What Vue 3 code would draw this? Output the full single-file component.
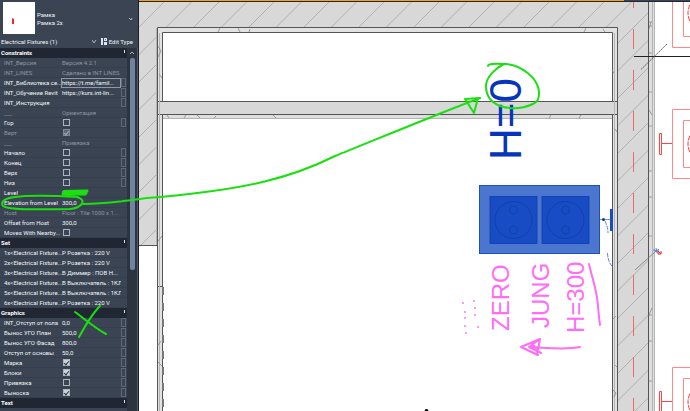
<script setup>
import { reactive } from 'vue'

const sections = reactive([
  {
    title: 'Constraints',
    rows: [
      { label: 'INT_Версия', value: 'Версия 4.2.1', muted: true },
      { label: 'INT_LINES', value: 'Сделано в INT LINES', muted: true },
      { label: 'INT_Библиотека се...', value: 'https://t.me/famil...', link: true, active: true },
      { label: 'INT_Обучение Revit', value: 'https://kurs.int-lin...', link: true },
      { label: 'INT_Инструкция', value: '', link: true },
      { label: '___', value: 'Ориентация', muted: true },
      { label: 'Гор', checked: false, link: true },
      { label: 'Верт', checked: true, muted: true },
      { label: '___', value: 'Привязка', muted: true },
      { label: 'Начало', checked: false, link: true },
      { label: 'Конец', checked: false, link: true },
      { label: 'Верх', checked: false, link: true },
      { label: 'Низ', checked: false, link: true },
      { label: 'Level', value: 'Level 1' },
      { label: 'Elevation from Level', value: '300,0' },
      { label: 'Host', value: 'Floor : Tile 1000 x 1...', muted: true },
      { label: 'Offset from Host', value: '300,0' },
      { label: 'Moves With Nearby...', checked: false }
    ]
  },
  {
    title: 'Set',
    rows: [
      { label: '1x<Electrical Fixture...', value: 'Р Розетка : 220 V' },
      { label: '2x<Electrical Fixture...', value: 'Р Розетка : 220 V' },
      { label: '3x<Electrical Fixture...', value: 'В Диммер : ПОВ Н...' },
      { label: '4x<Electrical Fixture...', value: 'В Выключатель : 1КЛ' },
      { label: '5x<Electrical Fixture...', value: 'В Выключатель : 1КЛ' },
      { label: '6x<Electrical Fixture...', value: 'Р Розетка : 220 V' }
    ]
  },
  {
    title: 'Graphics',
    rows: [
      { label: 'INT_Отступ от пола', value: '0,0', link: true },
      { label: 'Вынос УГО План', value: '500,0', link: true },
      { label: 'Вынос УГО Фасад', value: '800,0', link: true },
      { label: 'Отступ от основы', value: '50,0', link: true },
      { label: 'Марка', checked: true, link: true },
      { label: 'Блоки', checked: true, link: true },
      { label: 'Привязка', checked: false, link: true },
      { label: 'Выноска', checked: true, link: true }
    ]
  },
  { title: 'Text', rows: [{ label: 'INT_Текст', value: 'Розетка' }] }
])

// Diagonal hatch: every line satisfies x + y = sum
const hatch = Array.from({ length: 34 }, (_, k) => 166 + k * 27.5)
const axisDashes = Array.from({ length: 11 }, (_, k) => k * 41 - 12)
const shadowDashes = Array.from({ length: 8 }, (_, k) => 287 + k * 16)
const fixtures = [-22, 109, 367]
const sockets = [513, 565]
const dots = [[463, 303], [474, 301], [465, 312], [475, 308], [465, 318], [475, 315], [465, 326], [478, 327], [466, 333]]
const leftTicks = ['M158 46l3 5-3 6', 'M159 74l3 4', 'M158 241l4-5', 'M158 345l3-4', 'M158 362l4 4', 'M218 32l2-4', 'M240 32l-2-4', 'M249 32l1-3', 'M169 118l-2-3', 'M184 118l2-3', 'M200 118l-3-3', 'M214 118l2-2', 'M276 118l-3-3', 'M549 118l2-3', 'M579 118l2-3', 'M584 32l2-4', 'M605 32l-2-3', 'M614 73l-2-3', 'M617 132l-2-3', 'M613 319l3-3', 'M617 367l-2-2', 'M613 390l3 3-2 4']
const rightTicks = [22, 26, 53, 92, 126, 171, 197, 236, 315, 341, 381]
</script>

<template>
  <main class="workspace">
    <aside class="panel">
      <header class="family">
        <svg class="preview" viewBox="0 0 32 32" aria-hidden="true">
          <rect width="32" height="32" fill="#fff" />
          <path d="M9 16l2 1v5H9z" fill="#e52c2c" />
        </svg>
        <button class="type-picker" type="button">
          <span>Рамка<br />Рамка 2x</span>
          <svg class="arrow" viewBox="0 0 5 4"><path d="M1 1l2 2 1-2" /></svg>
        </button>
      </header>
      <div class="filter">
        <select aria-label="Category"><option>Electrical Fixtures (1)</option></select>
        <svg class="arrow" viewBox="0 0 5 4"><path d="M0 0l2 3 2-3" /></svg>
        <button class="edit" type="button">
          <svg viewBox="0 0 6 7" aria-hidden="true">
            <path d="M0 0h2v7H0zM3 0h3v3H3zM3 4h3v3H3z" fill="#dfe5ec" /><path d="M4 1h1v1H4z" fill="#4b82c8" />
          </svg>
          <span>Edit Type</span>
        </button>
      </div>
      <div class="body">
        <table>
          <colgroup><col class="c-name" /><col class="c-value" /><col class="c-link" /></colgroup>
          <tbody v-for="(section, s) in sections" :key="section.title">
            <tr class="section">
              <th colspan="2">{{ section.title }}</th>
              <td><button type="button" class="collapse" :aria-label="'Collapse ' + section.title"></button></td>
            </tr>
            <tr v-for="(row, r) in section.rows" :key="r" :class="{ muted: row.muted }">
              <th><label :for="`p-${s}-${r}`">{{ row.label }}</label></th>
              <td :class="{ active: row.active }">
                <input v-if="'checked' in row" :id="`p-${s}-${r}`" v-model="row.checked" type="checkbox" :disabled="row.muted" />
                <input v-else :id="`p-${s}-${r}`" v-model="row.value" type="text" :readonly="row.muted" />
              </td>
              <td><button v-if="row.link" type="button" class="link" :aria-label="'Associate ' + row.label"></button></td>
            </tr>
          </tbody>
        </table>
        <div class="scroll" aria-hidden="true">
          <svg class="arrow" viewBox="0 0 5 4"><path d="M0 3l2-2 2 2" /></svg>
          <i class="thumb"></i>
        </div>
      </div>
    </aside>

    <svg class="plan" viewBox="139 0 551 411" preserveAspectRatio="xMinYMin slice" role="img" aria-label="Floor plan">
      <defs>
        <clipPath id="walls"><path d="M139 2H648V411H618V27H157V245H139z" /></clipPath>
      </defs>
      <rect x="139" width="551" height="411" fill="#fff" />
      <path d="M139 2H648V411H618V27H157V245H139z" fill="#d8d8d8" />
      <g clip-path="url(#walls)" stroke="#a4a4a4" stroke-width="0.8">
        <line v-for="h in hatch" :key="h" :x1="h" y1="0" :x2="h - 411" y2="411" />
      </g>
      <path d="M157 27H618V411H612V32H163V411H157z" fill="#e2e2e2" />
      <rect x="158" y="101" width="460" height="14" fill="#d8d8d8" />
      <rect x="163" y="115" width="449" height="4" fill="#dedede" />
      <rect x="649" y="2" width="6" height="409" fill="#dedede" />
      <g fill="none" stroke="#555" stroke-width="1">
        <path d="M157.5 411V27.5H617.5V411M162.5 101V32.5H612.5V101M162.5 411V115M612.5 411V115M157 101.5H617M157 114.5H617M139 245.5H157M648.5 2V411" />
        <path d="M158 286.5h5" />
      </g>
      <path d="M159.500 33V411M163 118.500H612M614.500 33V411M652.500 2V411M654.500 2V411M156.500 28V245" fill="none" stroke="#b4b4b4" />
      <g fill="none" stroke="#888" stroke-width="0.8">
        <path v-for="t in leftTicks" :key="t" :d="t" />
        <path v-for="t in rightTicks" :key="t" :d="`M649 ${t}h3`" />
        <path d="M649 29l2-7M649 110l3 5M649 315l3-7" />
      </g>
      <rect v-for="d in shadowDashes" :key="d" x="162" :y="d" width="2" height="8" fill="#777" />
      <rect v-for="d in axisDashes" :key="d" x="633" :y="d" width="1" height="20" fill="#ee6a6a" />
      <g v-for="y in fixtures" :key="y" fill="none" stroke="#f88" stroke-width="1">
        <path :d="`M691 ${y + 0.5}H672.500V${y + 69.5}H691M691 ${y + 11.5}H683.500V${y + 58.5}H691`" />
        <circle cx="706" :cy="y + 35" r="18" stroke="#f33" stroke-dasharray="5 1" />
        <path v-if="y > 0" :d="`M672 ${y + 34.5}h-11M659.500 ${y + 24.5}h2v21h-2z`" stroke="#f44" />
      </g>
      <path d="M634 56.500H690" stroke="#222" />
      <path d="M641 69.500L667 44" stroke="#444" stroke-width="0.8" stroke-dasharray="2 0.5" />
      <path d="M635 270L655 252" stroke="#777" stroke-width="0.8" />
      <path d="M653 250l6 1M656 248l1 5M655 252l4-3" stroke="#4b85dd" stroke-width="1" />
      <path d="M658 254v-3l3 3v-3M658 254h3" stroke="#e22424" stroke-width="1" fill="none" />

      <rect x="479.500" y="185.500" width="120" height="68" fill="#4b76d0" stroke="#204fb5" />
      <g v-for="x in sockets" :key="x" stroke="#103ea6" stroke-width="0.8" fill="none">
        <rect :x="x - 23" y="196.500" width="47" height="47" fill="#174cc4" />
        <circle :cx="x + 0.5" cy="220" r="18.500" />
        <circle :cx="x + 0.5" cy="210" r="4" />
        <circle :cx="x + 0.5" cy="230" r="4" />
      </g>
      <path d="M600 219.500H612" stroke="#7795d5" />
      <circle cx="603.500" cy="219.500" r="1.500" fill="#12317e" />
      <rect x="610" y="209" width="3" height="22" fill="#174cc4" />
      <path d="M605 221Q608 227 608 233M607.500 253Q608 262 612 266" fill="none" stroke="#5c83d4" stroke-dasharray="4 1" />
      <text class="tag" transform="translate(521 160) rotate(-90)">H=0</text>
      <path d="M424.500 411l1-2h2l1 2z" fill="#111" />
      <rect x="139" width="485" height="1" fill="#f9a01b" />
      <rect x="624" width="66" height="1" fill="#39475a" />
      <rect x="139" y="1" width="551" height="1" fill="#24272c" />
    </svg>

    <svg class="markup" viewBox="0 0 690 411" preserveAspectRatio="xMinYMin slice" aria-label="Review notes">
      <g fill="none" stroke="#1be010" stroke-width="2" stroke-linecap="round" stroke-linejoin="round">
        <path d="M64 193H86M64 191.500L87 191M63 194L85 194" stroke-width="3" />
        <path d="M78 197C60 196 30 195 15 197C5 198 0 202 3 206C9 211 50 209 70 209C80 208 84 203 82 200C80 197 74 196 66 196" />
        <path d="M83 204C105 204 125 201 147 198C250 190 295 176 335 156C370 142 440 113 480 98" />
        <path d="M480 98L465 99L474 113L478 98" />
        <path d="M488 66C488 63 500 64 506 64C520 65 538 77 539 92C539 102 536 102 533 104C524 108 512 110 500 106C490 102 486 95 486 86C486 77 496 68 504 64" />
        <path d="M75 312C86 320 95 328 106 334M100 306C90 316 85 327 79 337" />
      </g>
      <g fill="none" stroke="#ff6cf6" stroke-width="2" stroke-linecap="round" stroke-linejoin="round">
        <path d="M589 264C592 278 597 290 598 306Q599 318 600 325" />
        <path d="M580 347C565 350 550 348 531 347M540 339L521 347L538 355M540 339L529 347L541 353M540 339L537 355M532 343L539 352" />
      </g>
      <circle v-for="(d, i) in dots" :key="i" :cx="d[0]" :cy="d[1]" r="0.900" fill="#ff6cf6" />
      <text class="note" transform="translate(509 331) rotate(-90)">ZERO</text>
      <text class="note" transform="translate(549 328) rotate(-90)">JUNG</text>
      <text class="note" transform="translate(584 333) rotate(-90)">H=300</text>
    </svg>
  </main>
</template>

<style>
body { margin: 0; background: #fff; overflow: hidden; }
</style>

<style scoped>
* { box-sizing: border-box; }
.workspace {
  position: relative;
  display: grid;
  grid-template-columns: 139px 1fr;
  height: 100vh;
  overflow: hidden;
  font: 6px/10px Roboto, "Noto Sans", sans-serif;
  color: #f2f5f8;
}
.panel {
  display: flex;
  flex-direction: column;
  min-height: 0;
  overflow: hidden;
  background: #3b4453;
  border-right: 1px solid #18202e;
}
button, select, input {
  margin: 0;
  padding: 0;
  border: 0;
  border-radius: 0;
  background: none;
  color: inherit;
  font: inherit;
  appearance: none;
}
.arrow { width: 5px; height: 4px; flex: none; fill: none; stroke: #aab4c2; }
.family { display: flex; gap: 2px; height: 36px; padding: 2px 5px 0 3px; }
.preview { width: 32px; height: 32px; flex: none; }
.type-picker { display: flex; flex: 1; align-items: center; justify-content: space-between; text-align: left; line-height: 8px; }
.filter { display: flex; align-items: center; height: 12px; padding: 0 5px 1px 1px; }
.filter select { flex: 1; min-width: 0; height: 10px; }
.edit { display: flex; align-items: center; gap: 2px; margin-left: 4px; white-space: nowrap; }
.edit svg { width: 6px; height: 7px; }
.body { display: flex; flex: 1; min-height: 0; background: #2d3440; }
table { width: 127px; flex: none; align-self: flex-start; border-collapse: collapse; table-layout: fixed; background: #3b4453; }
.c-name { width: 61px; }
.c-value { width: 60px; }
.c-link { width: 6px; }
tr { height: 10px; }
th, td { height: 10px; padding: 0; font-weight: 400; text-align: left; white-space: nowrap; line-height: 10px; vertical-align: top; box-shadow: inset 0 -1px #353e4c; }
th { padding-left: 4px; }
label { display: block; height: 10px; }
.section th, .section td { background: #202733; box-shadow: none; }
.section th { padding-left: 1px; font-weight: 700; color: #fff; }
.muted { color: #8c96a4; }
input[type="text"] { display: block; width: 100%; height: 10px; padding-left: 1px; line-height: 10px; }
.active { outline: 1px solid #8e98a6; outline-offset: -1px; }
input[type="checkbox"] { display: block; width: 7px; height: 7px; margin: 1px 2px; border: 1px solid #aab3bf; }
input[type="checkbox"]:checked { background: #cbd2da; }
input[type="checkbox"]:checked::before {
  content: "";
  display: block;
  width: 2px;
  height: 4px;
  margin-left: 1px;
  border: solid #2c3542;
  border-width: 0 1px 1px 0;
  transform: rotate(40deg);
}
.muted input[type="checkbox"] { border-color: #7d8796; }
.muted input[type="checkbox"]:checked { background: #5d6775; }
.muted input[type="checkbox"]:checked::before { border-color: #a3acb8; }
.link { display: block; width: 5px; height: 9px; border: 1px solid #5d6878; }
.collapse { display: block; width: 1px; height: 3px; margin: 2px 3px; background: #d9dee5; }
.scroll { display: flex; flex: 1; flex-direction: column; align-items: center; gap: 3px; padding-top: 3px; border-right: 1px solid #4a586c; }
.thumb { width: 5px; height: 59%; border-radius: 2px; background: #71839f; }
.plan { display: block; width: 100%; height: 100%; min-width: 0; }
.markup { position: absolute; inset: 0; width: 100%; height: 100%; pointer-events: none; }
.tag { font: 44px "Liberation Sans", sans-serif; fill: #0634bb; }
.note { font: 24px "Liberation Sans", sans-serif; fill: #ff6cf6; }
</style>
